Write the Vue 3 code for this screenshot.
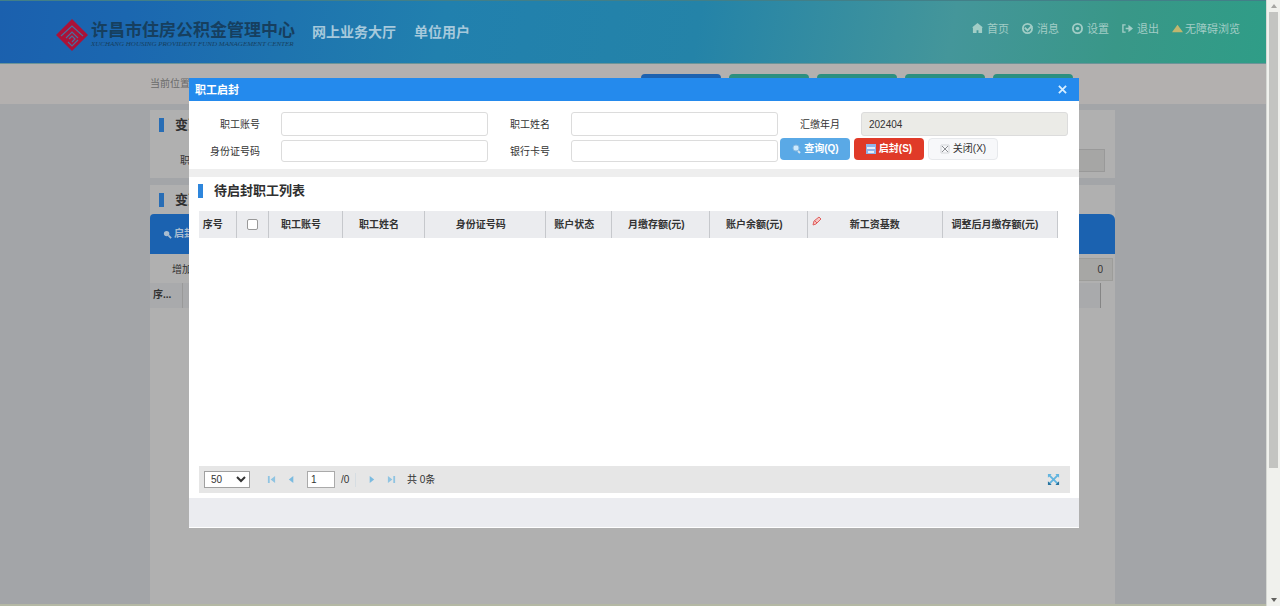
<script setup>
import { ref } from 'vue'

const tabs = ['登记信息', '提交审核', '导入数据', '导出数据', '打印清册']
const columns = [
  { text: '序号', cls: 'c-no' },
  { text: '', cls: 'c-check', check: true },
  { text: '职工账号', cls: 'c-account' },
  { text: '职工姓名', cls: 'c-name' },
  { text: '身份证号码', cls: 'c-id' },
  { text: '账户状态', cls: 'c-state' },
  { text: '月缴存额(元)', cls: 'c-money' },
  { text: '账户余额(元)', cls: 'c-money' },
  { text: '新工资基数', cls: 'c-base', edit: true },
  { text: '调整后月缴存额(元)', cls: 'c-after' },
]
const month = ref('202404')
const page = ref('1')
const size = ref('50')
</script>

<template>
  <div class="screen">
    <div class="page">
      <header class="top">
        <svg class="logo" viewBox="0 0 32 32" aria-hidden="true">
          <path d="M16 0 32 16 16 32 0 16Z" fill="#ab1238" />
          <path d="M5 17 16 7l11 10M10 19l6-6 6 6M12 23l4 4 6-6M13 20l3-3 3 3-3 3" fill="none" stroke="#4a6f9c" stroke-width="1.2" />
        </svg>
        <div class="brand">
          <span class="brand-cn">许昌市住房公积金管理中心</span>
          <span class="brand-en">XUCHANG HOUSING PROVIDENT FUND MANAGEMENT CENTER</span>
        </div>
        <span class="hall">网上业务大厅</span>
        <span class="hall">单位用户</span>
        <nav class="links">
          <a href="#"><svg viewBox="0 0 12 12"><path d="M6 0 12 5h-1v6H7V8H5v3H1V5H0Z" fill="currentColor" /></svg>首页</a>
          <a href="#"><svg viewBox="0 0 12 12"><circle cx="6" cy="6" r="5" fill="none" stroke="currentColor" stroke-width="2" /><path d="M3 5l3 3 5-5" fill="none" stroke="currentColor" stroke-width="2" /></svg>消息</a>
          <a href="#"><svg viewBox="0 0 12 12"><circle cx="6" cy="6" r="5" fill="none" stroke="currentColor" stroke-width="2" /><circle cx="6" cy="6" r="2" fill="currentColor" /></svg>设置</a>
          <a href="#"><svg viewBox="0 0 12 12"><path d="M4 2H1v8h3M4 6h4" fill="none" stroke="currentColor" stroke-width="1.5" /><path d="M7 2l5 4-5 4Z" fill="currentColor" /></svg>退出</a>
          <a href="#" class="access"><svg viewBox="0 0 12 12"><path d="M6 2l6 8H0Z" fill="#c1b66e" /></svg>无障碍浏览</a>
        </nav>
      </header>

      <div class="crumbs">
        <span>当前位置</span>
        <div class="tabs">
          <button v-for="t in tabs" :key="t" type="button">{{ t }}</button>
        </div>
      </div>

      <main class="content">
        <section class="panel">
          <h2>变更</h2>
          <div class="back-row"><label for="b-month">职工</label><input id="b-month" readonly></div>
        </section>
        <section class="panel grow">
          <h2>变更</h2>
          <div class="toolbar">
            <button type="button"><svg viewBox="0 0 10 10"><circle cx="4" cy="4" r="3" fill="#a9bdd0" /><path d="M6 6l3 3" stroke="#a9bdd0" stroke-width="2" /></svg>启封</button>
          </div>
          <div class="sum-row"><label for="b-sum">增加</label><input id="b-sum" value="0" readonly></div>
          <div class="back-head"><span>序...</span></div>
        </section>
      </main>

      <div class="dialog" role="dialog" aria-labelledby="dlg-title">
        <div class="dialog-bar">
          <h1 id="dlg-title">职工启封</h1>
          <button type="button" aria-label="关闭窗口"><svg viewBox="0 0 10 10"><path d="M1 1l8 8M9 1L1 9" stroke="#d7eeff" stroke-width="2" /></svg></button>
        </div>

        <form class="query" @submit.prevent>
          <label for="f-acc">职工账号</label><input id="f-acc">
          <label for="f-name">职工姓名</label><input id="f-name">
          <label for="f-month">汇缴年月</label><input id="f-month" v-model="month" readonly>
          <label for="f-id">身份证号码</label><input id="f-id">
          <label for="f-card">银行卡号</label><input id="f-card">
          <div class="actions">
            <button type="submit" class="search"><svg viewBox="0 0 10 10"><circle cx="5" cy="4" r="3" fill="#cbeaff" stroke="#8ebde0" /><path d="M7 7l2 2" stroke="#d3e3ee" stroke-width="2" /></svg>查询(Q)</button>
            <button type="button" class="unseal"><svg viewBox="0 0 10 10"><path d="M0 0h10v10H0Z" fill="#8eb5ea" /><path d="M1 4h8M2 8h6" stroke="#e5eefb" stroke-width="2" /></svg>启封(S)</button>
            <button type="button" class="close"><svg viewBox="0 0 10 10"><path d="M1 1h8v8H1Z" fill="none" stroke="#d5d7da" /><path d="M2 2l6 6M8 2L2 8" stroke="#8b8e92" /></svg>关闭(X)</button>
          </div>
        </form>

        <h2 class="list-title">待启封职工列表</h2>
        <div class="list">
          <table>
            <thead>
              <tr>
                <th v-for="(c, i) in columns" :key="i" :class="c.cls">
                  <input v-if="c.check" type="checkbox" aria-label="全选">
                  <svg v-if="c.edit" class="pen" viewBox="0 0 10 10"><path d="M1 9l1-4 5-4 2 2-5 5Z" fill="#f6c5c3" stroke="#e0605f" /><path d="M3 5l2 2" stroke="#e0605f" /></svg>
                  {{ c.text }}
                </th>
              </tr>
            </thead>
          </table>
        </div>

        <div class="pager">
          <select v-model="size" aria-label="每页条数"><option>50</option><option>100</option></select>
          <button type="button" class="first" aria-label="首页"><svg viewBox="0 0 10 10"><path d="M1 1h2v8H1ZM9 1v8L4 5Z" fill="#8fc4e2" /></svg></button>
          <button type="button" aria-label="上一页"><svg viewBox="0 0 10 10"><path d="M7 1v8L2 5Z" fill="#7bbbe0" /></svg></button>
          <input v-model="page" aria-label="页码">
          <span class="total">/0</span>
          <button type="button" aria-label="下一页"><svg viewBox="0 0 10 10"><path d="M3 1v8l5-4Z" fill="#7bbbe0" /></svg></button>
          <button type="button" aria-label="末页"><svg viewBox="0 0 10 10"><path d="M7 1h2v8H7ZM1 1v8l5-4Z" fill="#8fc4e2" /></svg></button>
          <span class="count">共 0条</span>
          <button type="button" class="expand" aria-label="展开"><svg viewBox="0 0 14 14"><path d="M2 2l10 10M12 2L2 12" stroke="#62b4df" stroke-width="2" /><path d="M1 1h4L1 5ZM13 1v4L9 1Z" fill="#62b4df" /><path d="M1 13V9l4 4ZM13 13H9l4-4Z" fill="#27739f" /></svg></button>
        </div>
        <div class="dialog-foot"></div>
      </div>
    </div>

    <div class="scroll" aria-hidden="true">
      <svg viewBox="0 0 8 6"><path d="M4 1l3 4H1Z" fill="#a5a5a2" /></svg>
      <div class="thumb"></div>
      <svg viewBox="0 0 8 6"><path d="M1 1h6L4 5Z" fill="#62625f" /></svg>
    </div>
  </div>
</template>

<style>
body { margin: 0; }
</style>

<style scoped>
* { box-sizing: border-box; }
.screen {
  display: flex;
  height: 100vh;
  overflow: hidden;
  font: 10px/14px "Liberation Sans", "Noto Sans CJK SC", sans-serif;
  color: #333;
}
button, input, select { font: inherit; color: inherit; margin: 0; }
button { border: 0; padding: 0; background: none; }
h1, h2 { margin: 0; }
.page {
  position: relative;
  flex: 1;
  min-width: 0;
  display: flex;
  flex-direction: column;
  background: #a3a5a8;
  border-bottom: 2px solid #b4b8a4;
}
.top {
  display: flex;
  align-items: center;
  height: 64px;
  padding: 6px 26px 0 56px;
  border-top: 1px solid #427f88;
  border-bottom: 1px solid #6c9498;
  background: linear-gradient(100deg, #1b60ae 0%, #1b67b0 10%, #2180ae 35%, #2483a8 55%, #44969a 75%, #399788 88%, #2f9d87 100%);
}
.logo { width: 32px; height: 32px; flex: none; }
.brand {
  display: flex;
  flex-direction: column;
  width: 204px;
  margin: 0 17px 0 3px;
  color: #163f5f;
  white-space: nowrap;
}
.brand-cn { font-size: 17px; line-height: 18px; font-weight: 700; }
.brand-en { font: italic 7px/8px "Liberation Serif", serif; }
.hall { margin: -6px 18px 0 0; font-size: 14px; font-weight: 700; color: #a6c9dc; white-space: nowrap; }
.links { display: flex; gap: 13px; margin: -13px 0 0 auto; font-size: 11px; white-space: nowrap; }
.links a { display: flex; align-items: center; gap: 4px; color: #a2cdc6; text-decoration: none; }
.links .access { gap: 2px; }
.links svg { width: 11px; height: 11px; }
.crumbs {
  display: flex;
  align-items: flex-start;
  justify-content: space-between;
  height: 40px;
  padding: 10px 193px 0 150px;
  background: #b3b0af;
  color: #6a6a6a;
}
.crumbs > span { padding-top: 3px; }
.tabs { display: flex; gap: 8px; }
.tabs button { width: 80px; height: 22px; border-radius: 4px; background: #2c8f80; color: #b3c9c5; }
.tabs button:first-child { background: #1d62b0; }
.content { flex: 1; display: flex; flex-direction: column; gap: 7px; padding: 6px 151px 0 150px; }
.panel { background: #b0b0b0; height: 68px; }
.panel.grow { flex: 1; }
.panel h2, .list-title {
  display: flex;
  align-items: center;
  gap: 11px;
  height: 29px;
  padding-left: 9px;
  font-size: 13px;
  font-weight: 700;
  color: #303030;
}
.panel h2::before, .list-title::before { content: ""; width: 5px; height: 14px; background: #286db5; }
.back-row, .sum-row { display: flex; align-items: center; gap: 20px; }
.back-row { padding: 10px 10px 0 30px; }
.back-row input { flex: 1; height: 23px; border: 1px solid #999; background: #a6a6a5; }
.toolbar { height: 40px; padding: 13px; background: #1b62b0; border-radius: 4px 6px 0 0; }
.toolbar button { display: flex; align-items: center; gap: 2px; color: #a9bdd0; font-weight: 700; }
.toolbar svg { width: 9px; height: 9px; }
.sum-row { padding: 4px 2px 2px 22px; }
.sum-row input { flex: 1; height: 23px; padding: 0 9px; border: 1px solid #9d9d9a; background: #a7a7a5; text-align: right; }
.back-head { margin-right: 14px; height: 25px; background: #a9aaac; border-right: 1px solid #858585; }
.back-head span { display: block; width: 33px; height: 25px; padding: 5px 3px; border-right: 1px solid #999; font-weight: 700; }

.dialog {
  position: absolute;
  top: 78px;
  bottom: 76px;
  left: 189px;
  right: 187px;
  display: flex;
  flex-direction: column;
  background: #fff;
}
.dialog-bar {
  display: flex;
  align-items: center;
  justify-content: space-between;
  height: 23px;
  padding: 0 12px 0 6px;
  background: #248aed;
}
.dialog-bar h1 { font-size: 11px; color: #fff; }
.dialog-bar svg { display: block; width: 9px; height: 9px; }
.query {
  display: grid;
  grid-template-columns: 92px 1fr 83px 1fr 83px 1fr;
  grid-template-rows: 24px 22px;
  row-gap: 4px;
  align-items: center;
  padding: 11px 11px 7px 0;
  border-bottom: 8px solid #eee;
}
.query label { padding: 2px 21px 0 0; text-align: right; }
.query input {
  width: 100%;
  height: 100%;
  min-width: 0;
  padding: 0 7px;
  border: 1px solid #dcdcdc;
  border-radius: 3px;
  background: #fff;
}
.query input[readonly] { background: #ebebe7; }
.actions { grid-column: 5 / 7; display: flex; gap: 4px; align-self: start; margin: -2px 0 0 2px; }
.actions button {
  display: flex;
  align-items: center;
  justify-content: center;
  gap: 3px;
  width: 70px;
  height: 22px;
  border-radius: 4px;
  color: #fff;
  font-weight: 700;
}
.actions svg { width: 10px; height: 10px; }
.search { background: #5aa9e6; }
.unseal { background: #e03a28; }
.actions .close { border: 1px solid #e7e9ec; background: #f7f8fa; color: #333; font-weight: 400; }
.list-title { height: 28px; margin: 0 0 6px; }
.list-title::before { background: #2e86dc; }
.list { flex: 1; padding: 0 21px 0 10px; }
table { width: 100%; table-layout: fixed; border-collapse: collapse; }
th {
  position: relative;
  height: 27px;
  padding: 0;
  background: #ebecef;
  border-right: 1px solid #c6c8cc;
  line-height: 14px;
  text-align: center;
  white-space: nowrap;
}
.c-no { width: 37px; padding-right: 9px; }
.c-check { width: 32px; }
.c-account { width: 74px; padding-right: 8px; }
.c-name { width: 82px; padding-right: 8px; }
.c-id { width: 121px; padding-right: 8px; }
.c-state { width: 66px; padding-right: 8px; }
.c-money { width: 98px; padding-right: 8px; }
.c-base { width: 135px; }
.c-after { width: 115px; padding-right: 10px; }
th input { display: block; width: 11px; height: 11px; margin: 0 auto; appearance: none; border: 1px solid #999; border-radius: 2px; background: #fff; }
.pen { position: absolute; left: 4px; top: 5px; width: 10px; height: 10px; }
.pager {
  display: flex;
  align-items: center;
  height: 27px;
  margin: 0 9px 5px 10px;
  padding: 0 10px 0 5px;
  background: #e6e6e6;
}
.pager svg { display: block; width: 9px; height: 9px; }
.pager button { margin-right: 11px; }
.pager .first { margin-left: 17px; }
.pager select { width: 46px; height: 17px; padding: 0 2px; border: 1px solid #a0a0a0; background: #fff; }
.pager input { width: 28px; height: 17px; padding: 0 3px; border: 1px solid #aaa; background: #fff; }
.total { width: 15px; margin: 0 11px 0 6px; border-right: 1px solid #d6dde2; }
.pager .expand { margin: 0 0 0 auto; }
.pager .expand svg { width: 13px; height: 13px; }
.dialog-foot { height: 30px; background: #ebecf0; border-bottom: 1px solid #fff; }
.scroll {
  display: flex;
  flex-direction: column;
  align-items: center;
  width: 14px;
  padding: 3px 0;
  background: #f0f1ed;
  border-left: 1px solid #d6d8d4;
}
.scroll svg { width: 8px; height: 6px; flex: none; }
.thumb { width: 9px; height: 76%; margin: 3px 0 auto; background: #c3c4c1; }
</style>
